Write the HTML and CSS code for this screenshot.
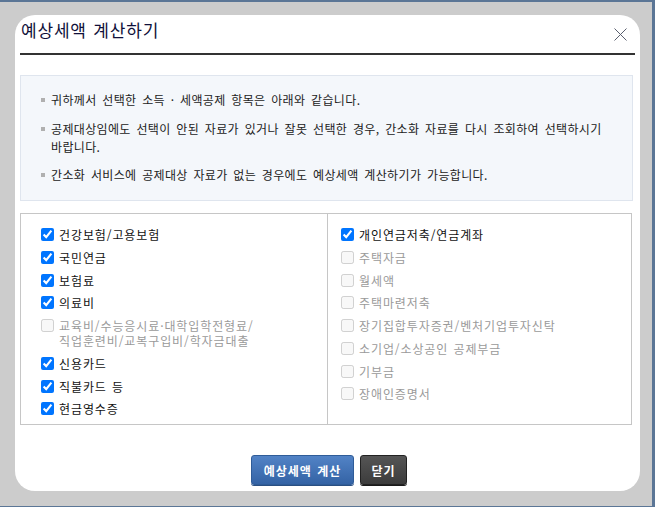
FILE: index.html
```html
<!DOCTYPE html>
<html lang="ko">
<head>
<meta charset="utf-8">
<title>예상세액 계산하기</title>
<link rel="stylesheet" href="styles.css">
</head>
<body>
<div class="frame">
  <div class="dialog">
    <div class="header">
      <h1 class="title">예상세액 계산하기</h1>
      <button class="close" type="button" aria-label="닫기">
        <svg width="13" height="13" viewBox="0 0 13 13"><path d="M0.5 0.5 L12.5 12.5 M12.5 0.5 L0.5 12.5" stroke="#5a5f6e" stroke-width="1" fill="none"/></svg>
      </button>
    </div>

    <div class="info">
      <p class="info-item"><span class="bullet"></span><span class="info-text">귀하께서 선택한 소득 · 세액공제 항목은 아래와 같습니다.</span></p>
      <p class="info-item"><span class="bullet"></span><span class="info-text">공제대상임에도 선택이 안된 자료가 있거나 잘못 선택한 경우, 간소화 자료를 다시 조회하여 선택하시기 바랍니다.</span></p>
      <p class="info-item"><span class="bullet"></span><span class="info-text">간소화 서비스에 공제대상 자료가 없는 경우에도 예상세액 계산하기가 가능합니다.</span></p>
    </div>

    <div class="panel">
      <div class="col col-left">
        <label class="item"><input type="checkbox" checked><span>건강보험/고용보험</span></label>
        <label class="item"><input type="checkbox" checked><span>국민연금</span></label>
        <label class="item"><input type="checkbox" checked><span>보험료</span></label>
        <label class="item"><input type="checkbox" checked><span>의료비</span></label>
        <label class="item disabled"><input type="checkbox" disabled><span>교육비/수능응시료·대학입학전형료/<br>직업훈련비/교복구입비/학자금대출</span></label>
        <label class="item"><input type="checkbox" checked><span>신용카드</span></label>
        <label class="item"><input type="checkbox" checked><span>직불카드 등</span></label>
        <label class="item"><input type="checkbox" checked><span>현금영수증</span></label>
      </div>
      <div class="col col-right">
        <label class="item"><input type="checkbox" checked><span>개인연금저축/연금계좌</span></label>
        <label class="item disabled"><input type="checkbox" disabled><span>주택자금</span></label>
        <label class="item disabled"><input type="checkbox" disabled><span>월세액</span></label>
        <label class="item disabled"><input type="checkbox" disabled><span>주택마련저축</span></label>
        <label class="item disabled"><input type="checkbox" disabled><span>장기집합투자증권/벤처기업투자신탁</span></label>
        <label class="item disabled"><input type="checkbox" disabled><span>소기업/소상공인 공제부금</span></label>
        <label class="item disabled"><input type="checkbox" disabled><span>기부금</span></label>
        <label class="item disabled"><input type="checkbox" disabled><span>장애인증명서</span></label>
      </div>
    </div>

    <div class="actions">
      <button class="btn btn-primary" type="button">예상세액 계산</button>
      <button class="btn btn-dark" type="button">닫기</button>
    </div>
  </div>
</div>
</body>
</html>
```

FILE: styles.css
```css
* { box-sizing: border-box; }

html, body {
  margin: 0;
  padding: 0;
  background: #cccccc;
}

body {
  font-family: "Noto Sans CJK KR", "Noto Sans", sans-serif;
  font-size: 12px;
  color: #1a1a1a;
}

.frame {
  width: 655px;
  height: 507px;
  border-top: 2px solid #5b7696;
  border-right: 3px solid #5b7696;
  border-bottom: 1px solid #5b7696;
  padding: 13px 12px 15px 15px;
}

.dialog {
  width: 625px;
  height: 476px;
  background: #ffffff;
  border-radius: 20px;
  padding: 0 5px;
}

.header {
  display: flex;
  justify-content: space-between;
  align-items: flex-start;
  border-bottom: 2px solid #333333;
  height: 40px;
}

.title {
  margin: 0;
  padding: 4px 0 0 1px;
  font-size: 17px;
  line-height: 22px;
  font-weight: normal;
  color: #10103a;
  letter-spacing: 0.8px;
  word-spacing: 1px;
}

.close {
  margin: 13px 8px 0 0;
  padding: 0;
  border: 0;
  background: none;
  width: 13px;
  height: 13px;
  display: block;
}
.close svg { display: block; }

.info {
  margin: 20px 2px 0 0;
  background: #f4f7fb;
  border: 1px solid #dfe5ee;
  padding: 15px 20px 16px 20px;
}

.info-item {
  margin: 0;
  display: flex;
  align-items: flex-start;
  line-height: 18px;
  color: #222;
  letter-spacing: 0.35px;
  word-spacing: 2px;
  word-break: keep-all;
}
.info-item + .info-item { margin-top: 10.5px; }

.bullet {
  flex: none;
  width: 4px;
  height: 4px;
  margin: 7px 6px 0 0;
  background: #b0b0b0;
}

.panel {
  margin: 12px 3px 0 0;
  border: 1px solid #c6c6c6;
  display: grid;
  grid-template-columns: 306px 1fr;
}

.col {
  display: flex;
  flex-direction: column;
  gap: 7.75px;
  padding: 13px 0 8px 20px;
}
.col-right {
  border-left: 1px solid #c6c6c6;
  padding-left: 13px;
}

.item {
  display: flex;
  align-items: flex-start;
  gap: 5px;
  line-height: 15px;
  color: #111;
  letter-spacing: 0.9px;
  word-spacing: 1px;
}
.item input {
  flex: none;
  margin: 1px 0 0 0;
  width: 13px;
  height: 13px;
}
.item.disabled { color: #9a9a9a; }

.actions {
  display: flex;
  justify-content: center;
  gap: 6px;
  margin-top: 30px;
  padding-left: 3px;
}

.btn {
  height: 30px;
  border-radius: 3px;
  font-family: "Noto Sans CJK KR", sans-serif;
  font-size: 12px;
  font-weight: bold;
  color: #ffffff;
  letter-spacing: 1px;
  word-spacing: 1px;
  padding: 0 10px;
  cursor: pointer;
}
.btn-primary {
  width: 103px;
  background: linear-gradient(#5283c6, #3463a5);
  border: 1px solid #2f5c98;
  box-shadow: 0 1px 0 #2a4f82;
}
.btn-dark {
  width: 47px;
  padding: 0;
  background: linear-gradient(#555555, #3c3c3c);
  border: 1px solid #222222;
  box-shadow: 0 1px 0 #1a1a1a;
}
```
